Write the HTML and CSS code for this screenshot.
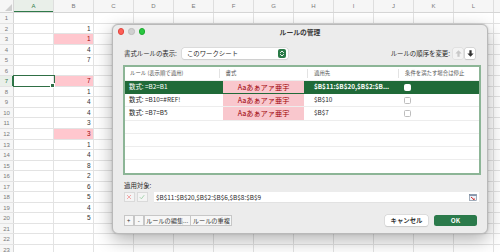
FILE: index.html
```html
<!DOCTYPE html>
<html lang="ja">
<head>
<meta charset="utf-8">
<title>ルールの管理</title>
<link rel="stylesheet" href="styles.css">
</head>
<body>
<div class="sheet">
  <div class="hrow">
    <div class="corner"><svg width="14" height="13" viewBox="0 0 14 13"><path d="M12 4 L12 11 L5 11 Z" fill="#cfcfcf"/></svg></div>
    <div class="ch sel">A</div><div class="ch">B</div><div class="ch">C</div><div class="ch">D</div><div class="ch">E</div><div class="ch">F</div><div class="ch">G</div><div class="ch">H</div><div class="ch">I</div><div class="ch">J</div><div class="ch">K</div><div class="ch">L</div><div class="ch fill"></div>
  </div>
  <div class="row"><div class="rh">1</div><div class="c"></div><div class="c"></div><div class="rest"></div></div>
  <div class="row"><div class="rh">2</div><div class="c"></div><div class="c">1</div><div class="rest"></div></div>
  <div class="row"><div class="rh">3</div><div class="c"></div><div class="c hl">1</div><div class="rest"></div></div>
  <div class="row"><div class="rh">4</div><div class="c"></div><div class="c">4</div><div class="rest"></div></div>
  <div class="row"><div class="rh">5</div><div class="c"></div><div class="c">7</div><div class="rest"></div></div>
  <div class="row"><div class="rh">6</div><div class="c"></div><div class="c"></div><div class="rest"></div></div>
  <div class="row"><div class="rh selrow">7</div><div class="c active"></div><div class="c hl">7</div><div class="rest"></div></div>
  <div class="row"><div class="rh">8</div><div class="c"></div><div class="c">1</div><div class="rest"></div></div>
  <div class="row"><div class="rh">9</div><div class="c"></div><div class="c">4</div><div class="rest"></div></div>
  <div class="row"><div class="rh">10</div><div class="c"></div><div class="c">4</div><div class="rest"></div></div>
  <div class="row"><div class="rh">11</div><div class="c"></div><div class="c">3</div><div class="rest"></div></div>
  <div class="row"><div class="rh">12</div><div class="c"></div><div class="c hl">3</div><div class="rest"></div></div>
  <div class="row"><div class="rh">13</div><div class="c"></div><div class="c">1</div><div class="rest"></div></div>
  <div class="row"><div class="rh">14</div><div class="c"></div><div class="c">4</div><div class="rest"></div></div>
  <div class="row"><div class="rh">15</div><div class="c"></div><div class="c">8</div><div class="rest"></div></div>
  <div class="row"><div class="rh">16</div><div class="c"></div><div class="c">2</div><div class="rest"></div></div>
  <div class="row"><div class="rh">17</div><div class="c"></div><div class="c">6</div><div class="rest"></div></div>
  <div class="row"><div class="rh">18</div><div class="c"></div><div class="c">5</div><div class="rest"></div></div>
  <div class="row"><div class="rh">19</div><div class="c"></div><div class="c">4</div><div class="rest"></div></div>
  <div class="row"><div class="rh">20</div><div class="c"></div><div class="c">5</div><div class="rest"></div></div>
  <div class="row"><div class="rh">21</div><div class="c"></div><div class="c"></div><div class="rest"></div></div>
  <div class="row"><div class="rh">22</div><div class="c"></div><div class="c"></div><div class="rest"></div></div>
  <div class="row"><div class="rh">23</div><div class="c"></div><div class="c"></div><div class="rest"></div></div>
</div>

<div class="dialog">
  <div class="titlebar">
    <div class="lights"><span class="light red"></span><span class="light gray"></span><span class="light green"></span></div>
    <div class="title">ルールの管理</div>
    <div></div>
  </div>
  <div class="dbody">
    <div class="toprow">
      <span class="lbl">書式ルールの表示:</span>
      <div class="select">
        <span>このワークシート</span>
        <svg class="stepper" width="8" height="9" viewBox="0 0 8 9"><rect x="0" y="0" width="8" height="9" rx="2" fill="#2a7a47"/><path d="M2.4 3.6 L4 2 L5.6 3.6 M2.4 5.4 L4 7 L5.6 5.4" stroke="#fff" stroke-width="0.9" fill="none" stroke-linecap="round" stroke-linejoin="round"/></svg>
      </div>
      <span class="grow"></span>
      <span class="lbl">ルールの順序を変更:</span>
      <span class="arrbtn disabled"><svg width="7" height="7" viewBox="0 0 10 10"><path d="M5 0.5 L9.5 5 H6.6 V9.5 H3.4 V5 H0.5 Z" fill="#c8c8c8"/></svg></span>
      <span class="arrbtn"><svg width="7" height="7" viewBox="0 0 10 10"><path d="M5 9.5 L9.5 5 H6.6 V0.5 H3.4 V5 H0.5 Z" fill="#333"/></svg></span>
    </div>

    <div class="table">
      <div class="thead">
        <div class="col c1">ルール (表示順で適用)</div>
        <div class="col c2 sep">書式</div>
        <div class="col c3 sep">適用先</div>
        <div class="col c4 sep">条件を満たす場合は停止</div>
      </div>
      <div class="trow selected">
        <div class="col c1">数式: =B2=B1</div>
        <div class="col c2"><span class="fmt">Aaあぁアァ亜宇</span></div>
        <div class="col c3"><span class="ell">$B$11:$B$20,$B$2:$B...</span></div>
        <div class="col c4"><span class="cb on"></span></div>
      </div>
      <div class="trow">
        <div class="col c1">数式: =B10=#REF!</div>
        <div class="col c2"><span class="fmt">Aaあぁアァ亜宇</span></div>
        <div class="col c3">$B$10</div>
        <div class="col c4"><span class="cb"></span></div>
      </div>
      <div class="trow">
        <div class="col c1">数式: =B7=B5</div>
        <div class="col c2"><span class="fmt">Aaあぁアァ亜宇</span></div>
        <div class="col c3">$B$7</div>
        <div class="col c4"><span class="cb"></span></div>
      </div>
      <div class="trow"></div>
      <div class="trow"></div>
      <div class="trow"></div>
      <div class="trow last"></div>
    </div>

    <div class="applylbl">適用対象:</div>
    <div class="applyrow">
      <span class="mini"><svg width="6" height="6" viewBox="0 0 6 6"><path d="M1 1 L5 5 M5 1 L1 5" stroke="#f0a0a0" stroke-width="0.9"/></svg></span>
      <span class="mini"><svg width="6" height="6" viewBox="0 0 6 6"><path d="M0.8 3.2 L2.4 4.8 L5.2 1.2" stroke="#9fd0a8" stroke-width="0.9" fill="none"/></svg></span>
      <div class="field">
        <span>$B$11:$B$20,$B$2:$B$6,$B$8:$B$9</span>
        <svg width="8" height="7" viewBox="0 0 8 7"><rect x="0.5" y="0.5" width="7" height="6" fill="#eef3fb" stroke="#6a7a90" stroke-width="0.6"/><rect x="0.5" y="0.5" width="7" height="1.4" fill="#7d8ca3"/><path d="M2 3 L5 5.6" stroke="#d0302a" stroke-width="1"/><path d="M3.6 5.9 L5.6 5.9 L5.6 4" fill="#d0302a"/></svg>
      </div>
    </div>

    <div class="btnrow">
      <div class="seg">
        <span class="sbtn sq">+</span>
        <span class="sbtn sq">-</span>
        <span class="sbtn">ルールの編集...</span>
        <span class="sbtn">ルールの重複</span>
      </div>
      <span class="grow"></span>
      <span class="pbtn cancel">キャンセル</span>
      <span class="pbtn ok">OK</span>
    </div>
  </div>
</div>
</body>
</html>
```
FILE: styles.css
```css
html, body {
  margin: 0;
  padding: 0;
}
body {
  width: 500px;
  height: 252px;
  overflow: hidden;
  position: relative;
  background: #fff;
  font-family: "Liberation Sans", Arial, sans-serif;
}

/* spreadsheet */
.sheet {
  display: flex;
  flex-direction: column;
  width: 500px;
  overflow: hidden;
}
.hrow {
  display: flex;
  height: 13px;
  box-sizing: border-box;
  border-bottom: 1px solid #d6d6d6;
  background: #f6f6f6;
}
.corner {
  width: 14px;
  flex: none;
  box-sizing: border-box;
  border-right: 1px solid #d6d6d6;
}
.corner svg { display: block; }
.ch {
  width: 40px;
  flex: none;
  box-sizing: border-box;
  border-right: 1px solid #dedede;
  text-align: center;
  font-size: 6px;
  line-height: 12px;
  color: #7a7a7a;
}
.ch.fill {
  flex: 1;
  width: auto;
  min-width: 0;
  border-right: none;
}
.ch.sel {
  color: #2f7a4a;
  box-shadow: inset 0 -1px 0 #2f7a4a;
  background: #e9efe9;
}
.row {
  display: flex;
  height: 10.55px;
  box-sizing: border-box;
  border-bottom: 1px solid #e3e3e3;
}
.rh {
  width: 14px;
  flex: none;
  box-sizing: border-box;
  border-right: 1px solid #d6d6d6;
  background: #f6f6f6;
  text-align: center;
  font-size: 6px;
  line-height: 10px;
  color: #7a7a7a;
}
.rh.selrow {
  color: #2f7a4a;
  background: #e9efe9;
  box-shadow: inset -1px 0 0 #2f7a4a;
}
.c {
  width: 40px;
  flex: none;
  box-sizing: border-box;
  border-right: 1px solid #e3e3e3;
  text-align: right;
  padding-right: 2.5px;
  font-size: 6.5px;
  line-height: 10px;
  color: #333;
}
.c.hl {
  background: #ffc7ce;
  color: #9c0006;
}
.c.active {
  position: relative;
  outline: 1.2px solid #2f6f45;
  outline-offset: -0.6px;
}
.c.active::after {
  content: "";
  position: absolute;
  right: -2px;
  bottom: -2px;
  width: 3px;
  height: 3px;
  background: #2f6f45;
  border: 0.5px solid #fff;
}
.rest {
  flex: 1;
  background: repeating-linear-gradient(to right, transparent 0 39px, #e3e3e3 39px 40px);
}

/* dialog */
.dialog {
  position: absolute;
  left: 112px;
  top: 24px;
  width: 376px;
  height: 210px;
  box-sizing: border-box;
  background: #ececec;
  border: 0.5px solid #b9b9b9;
  border-radius: 6px;
  box-shadow: 0 6px 18px rgba(0, 0, 0, 0.3), 0 0 2px rgba(0, 0, 0, 0.2);
  font-family: "Noto Sans CJK JP", "Noto Sans", sans-serif;
  color: #262626;
  display: flex;
  flex-direction: column;
}
.titlebar {
  display: grid;
  grid-template-columns: 1fr auto 1fr;
  align-items: center;
  height: 13px;
  padding: 0 4.5px;
}
.lights {
  display: flex;
  gap: 4px;
  align-items: center;
}
.light {
  width: 6.5px;
  height: 6.5px;
  border-radius: 50%;
  box-sizing: border-box;
}
.light.red { background: #fe5f57; border: 0.4px solid #e0443e; }
.light.gray { background: #d0d0d0; border: 0.4px solid #bdbdbd; }
.light.green { background: #2ac840; border: 0.4px solid #1ca92f; }
.title {
  font-size: 6.8px;
  font-weight: 700;
  color: #3a3a3a;
  line-height: 10px;
}
.dbody {
  display: flex;
  flex-direction: column;
  padding: 0 8px 0 10px;
  flex: 1;
}
.toprow {
  display: flex;
  align-items: center;
  margin-top: 10px;
  height: 11px;
}
.lbl {
  font-size: 6.4px;
  line-height: 9px;
  margin-left: 1px;
  color: #2a2a2a;
}
.grow { flex: 1; }
.select {
  margin-left: 5px;
  width: 106px;
  height: 10.6px;
  box-sizing: border-box;
  background: #fff;
  border-radius: 2.5px;
  box-shadow: 0 0 0 0.5px #cdcdcd, 0 0.6px 1px rgba(0, 0, 0, 0.12);
  display: flex;
  align-items: center;
  justify-content: space-between;
  padding: 0 1.5px 0 5px;
  font-size: 6.4px;
  line-height: 9px;
}
.stepper { display: block; }
.arrbtn {
  width: 10px;
  height: 10.5px;
  margin-left: 3px;
  box-sizing: border-box;
  background: #fff;
  border-radius: 1.5px;
  box-shadow: 0 0 0 0.5px #c4c4c4, 0 0.6px 1px rgba(0, 0, 0, 0.15);
  display: flex;
  align-items: center;
  justify-content: center;
}
.arrbtn.disabled {
  background: #f3f3f3;
  box-shadow: 0 0 0 0.5px #d6d6d6;
}
.arrbtn:last-child { margin-right: 4px; margin-left: 2px; }
.arrbtn svg { display: block; }

/* table */
.table {
  margin-top: 6px;
  width: 358px;
  height: 110px;
  box-sizing: border-box;
  border: 2px solid #8cb596;
  background: #fff;
  display: flex;
  flex-direction: column;
}
.thead {
  display: flex;
  height: 14px;
  flex: none;
  align-items: center;
  border-bottom: 1px solid #ededed;
  box-sizing: border-box;
}
.thead .col {
  font-size: 5.4px;
  line-height: 9px;
  color: #555;
  padding-left: 5px;
}
.thead .col.sep {
  border-left: 1px solid #e3e3e3;
  padding-left: 6px;
}
.col {
  box-sizing: border-box;
  flex: none;
  overflow: hidden;
  white-space: nowrap;
}
.c1 { width: 93.5px; }
.c2 { width: 88.5px; }
.c3 { width: 91px; }
.c4 { flex: 1; }
.trow {
  display: flex;
  height: 13.2px;
  flex: none;
  box-sizing: border-box;
  border-bottom: 1px solid #ededed;
  align-items: stretch;
}
.trow.last { border-bottom: none; }
.trow .col {
  font-size: 6.4px;
  line-height: 12px;
  display: flex;
  align-items: center;
}
.trow .c1 { padding-left: 4px; }
.trow .c2 { padding: 0 3px 0 4.5px; }
.trow .c3 { padding-left: 7px; padding-right: 4px; }
.trow .c4 { padding-left: 5.5px; }
.trow.selected {
  background: #206a38;
  color: #fff;
  border-bottom-color: #206a38;
}
.fmt {
  flex: 1;
  align-self: stretch;
  background: #f9c7cd;
  color: #9c0006;
  font-size: 7.2px;
  display: flex;
  align-items: center;
  justify-content: center;
}
.ell {
  display: block;
  white-space: nowrap;
  font-weight: 700;
}
.cb {
  width: 7px;
  height: 7px;
  box-sizing: border-box;
  border: 0.6px solid #bdbdbd;
  border-radius: 1.5px;
  background: #fff;
}
.cb.on { border-color: #fff; }

/* apply */
.applylbl {
  margin-top: 6px;
  margin-left: 1px;
  font-size: 6.4px;
  line-height: 9px;
}
.applyrow {
  display: flex;
  align-items: center;
  margin-top: 2px;
  height: 10px;
}
.mini {
  width: 10.5px;
  height: 10px;
  margin-left: 1px;
  margin-right: 1.5px;
  box-sizing: border-box;
  background: #f4f4f4;
  border: 0.5px solid #dadada;
  display: flex;
  align-items: center;
  justify-content: center;
}
.mini svg { display: block; }
.field {
  margin-left: 5px;
  flex: 1;
  height: 10px;
  background: #fff;
  display: flex;
  align-items: center;
  justify-content: space-between;
  padding: 0 2px 0 2px;
  font-size: 6.4px;
  line-height: 9px;
  box-shadow: 0 0.5px 0 #d8d8d8;
}
.field svg { display: block; }

/* buttons */
.btnrow {
  display: flex;
  align-items: center;
  margin-top: 12.5px;
  height: 11.5px;
}
.seg {
  display: flex;
  margin-left: 1px;
  height: 11px;
}
.sbtn {
  box-sizing: border-box;
  height: 11px;
  padding: 0 1.5px;
  background: #f7f7f7;
  border: 0.5px solid #c7c7c7;
  margin-left: -0.5px;
  font-size: 6.2px;
  line-height: 10px;
  color: #333;
  text-align: center;
}
.sbtn.sq {
  width: 10.5px;
  padding: 0;
  font-size: 6px;
}
.pbtn {
  box-sizing: border-box;
  height: 11.5px;
  width: 43px;
  border-radius: 2.5px;
  font-size: 6.4px;
  font-weight: 700;
  line-height: 11.5px;
  text-align: center;
}
.cancel {
  background: #fff;
  color: #333;
  box-shadow: 0 0 0 0.5px #cfcfcf, 0 0.6px 1px rgba(0, 0, 0, 0.15);
}
.ok {
  margin-left: 6px;
  margin-right: 2px;
  background: #2b7a4b;
  color: #fff;
}
```
